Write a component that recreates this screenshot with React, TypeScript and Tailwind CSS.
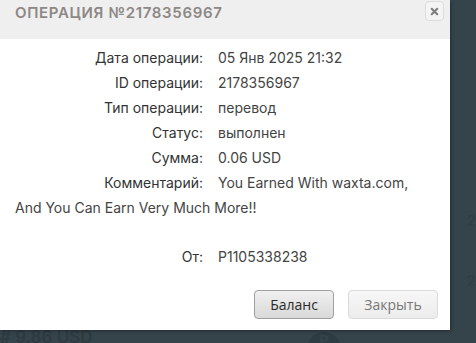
import { X } from 'lucide-react';

const rows = [
  { label: 'Дата операции:', value: '05 Янв 2025 21:32' },
  { label: 'ID операции:', value: '2178356967' },
  { label: 'Тип операции:', value: 'перевод' },
  { label: 'Статус:', value: 'выполнен' },
  { label: 'Сумма:', value: '0.06 USD' },
];

export default function App() {
  return (
    <div
      className="relative w-[476px] h-[343px] overflow-hidden bg-[#35444b]"
      style={{ fontFamily: 'Inter, "Noto Sans", sans-serif' }}
    >
      {/* фон страницы под модалкой */}
      <div className="absolute left-0 top-[330px] text-[17px] leading-[14px] text-[#2d3a40] font-semibold">
        # 9.86 USD
      </div>
      <div className="absolute left-[307px] top-[332px] w-[34px] h-[34px] rounded-full bg-[#2d3b42] text-center text-[#35444b] text-[15px] font-bold leading-[18px]">
        P
      </div>
      <div className="absolute left-[467px] top-[210px] text-[14px] text-[#2f3d44] font-semibold">2</div>
      <div className="absolute left-[467px] top-[270px] text-[14px] text-[#2f3d44] font-semibold">2</div>

      <div className="relative w-[450px] h-[330px] bg-white shadow-[1px_1px_3px_rgba(0,0,0,0.35)]">
        <div className="flex h-[39px] items-start justify-between bg-[#efefef] pl-[15px] pr-[6px]">
          <h3 className="pt-[2px] text-[15px] font-semibold uppercase tracking-[0.045em] text-[#8c8885]">
            Операция №2178356967
          </h3>
          <button className="mt-[1px] flex h-[20px] w-[19px] items-center justify-center rounded-[4px] border border-[#dcdcdc] bg-[#f4f4f4]">
            <X className="h-[11px] w-[11px] text-[#7f7f7f]" strokeWidth={4.5} />
          </button>
        </div>

        <div className="px-[15px] pt-[6px] text-[14px] leading-[25px] text-[#444]">
          {rows.map((r) => (
            <div key={r.label} className="flex">
              <span className="w-[188px] text-right text-[#333]">{r.label}</span>
              <span className="ml-[15px]">{r.value}</span>
            </div>
          ))}
          <div>
            <span className="inline-block w-[188px] text-right text-[#333]">Комментарий:</span>
            <span className="ml-[15px]">
              You Earned With waxta.com, And You Can Earn Very Much More!!
            </span>
          </div>
          <div className="mt-[24px] flex">
            <span className="w-[188px] text-right text-[#333]">От:</span>
            <span className="ml-[15px]">P1105338238</span>
          </div>
        </div>

        <div
          className="absolute right-[12px] bottom-[11px] flex gap-[14px] text-[14px]"
          style={{ fontFamily: '"Open Sans", sans-serif' }}
        >
          <button className="h-[29px] w-[80px] rounded-[4px] border border-[#9f9f9f] bg-gradient-to-b from-[#f0f0f0] to-[#d9d9d9] text-[#2a2a2a]">
            Баланс
          </button>
          <button className="h-[29px] w-[90px] rounded-[4px] border border-[#dadada] bg-gradient-to-b from-[#f7f7f7] to-[#ececec] text-[#777]">
            Закрыть
          </button>
        </div>
      </div>
    </div>
  );
}
